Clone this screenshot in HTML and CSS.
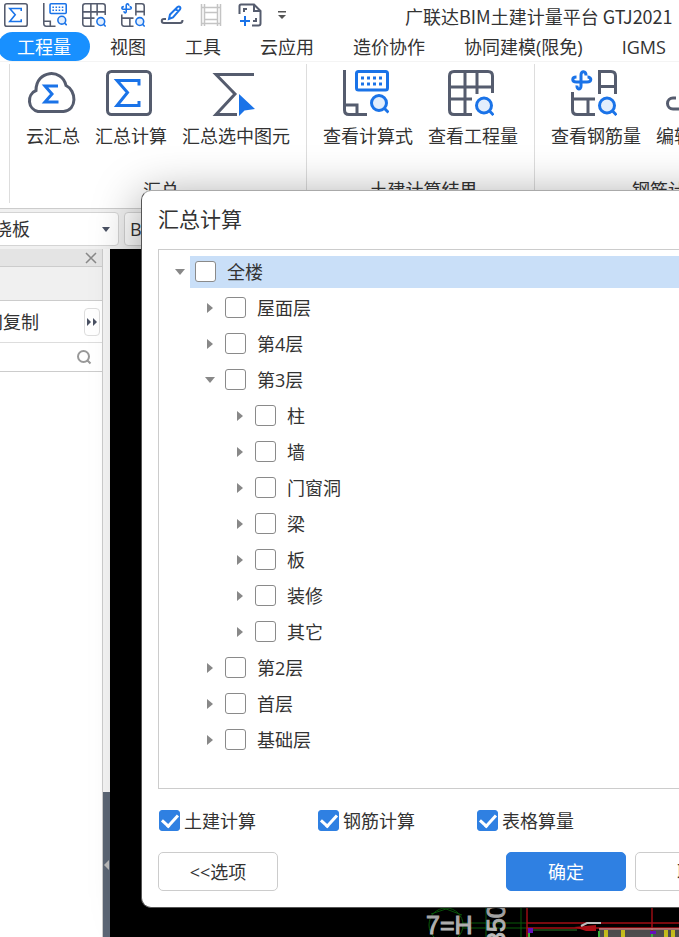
FILE: index.html
```
<!DOCTYPE html>
<html lang="zh-CN">
<head>
    <meta charset="UTF-8">
    <meta name="viewport" content="width=device-width, initial-scale=1">
    <title>广联达BIM土建计量平台 GTJ2021</title>
    <link rel="stylesheet" href="styles.css">
</head>
<body>
    <!-- shared icons -->
    <svg class="sprite" aria-hidden="true">
        <symbol id="i-sum" viewBox="0 0 46 46">
            <rect class="g" x="1.500" y="1.500" width="43" height="43" rx="4"/>
            <path class="b" d="M33 15.500v-5H11L21.500 22.500 11 35.500H33V31"/>
        </symbol>
        <symbol id="i-formula" viewBox="0 0 46 46">
            <path class="g" d="M1.500 0v40q0 4.500 4.500 4.500H24M1.500 35H14v9"/>
            <rect class="b" x="13.500" y="1.500" width="31" height="18.500" rx="2"/>
            <path class="dots" d="M18 8h24M18 14h24"/>
            <circle class="lens" cx="36" cy="33" r="7.500"/>
            <path class="b" d="M41.500 38.500l4 4"/>
        </symbol>
        <symbol id="i-table" viewBox="0 0 46 46">
            <path class="g" d="M24 44.500H6q-4.500 0-4.500-4.500V6Q1.500 1.500 6 1.500H40Q44.500 1.500 44.500 6V23M1.500 17h43M1.500 29H24M17 1.500v43M29 1.500V24"/>
            <circle class="lens" cx="36" cy="35.500" r="7.500"/>
            <path class="b" d="M41.500 41l4 4"/>
        </symbol>
        <symbol id="i-rebar" viewBox="0 0 46 46">
            <path class="b" d="M15 5.500C15 .5 10 .5 10 5V16C10 20 5.500 20 6 15.500M5.500 7C.5 7 .5 12 5.500 12H16C21 12 21 7 16.500 7"/>
            <path class="g" d="M28.500 24V1.500H40Q44.500 1.500 44.500 6V24M28.500 16.500h16M1.500 22v18q0 4.500 4.500 4.500H24M1.500 29H24M17 29v15"/>
            <circle class="lens" cx="36" cy="35.500" r="7.500"/>
            <path class="b" d="M41.500 41l4 4"/>
        </symbol>
    </svg>

    <div class="app">
        <header class="titlebar">
            <div class="quick">
                <button type="button" aria-label="汇总计算"><svg class="icon"><use href="#i-sum"/></svg></button>
                <button type="button" aria-label="查看计算式"><svg class="icon"><use href="#i-formula"/></svg></button>
                <button type="button" aria-label="查看工程量"><svg class="icon"><use href="#i-table"/></svg></button>
                <button type="button" aria-label="查看钢筋量"><svg class="icon"><use href="#i-rebar"/></svg></button>
                <button type="button" aria-label="编辑钢筋">
                    <svg class="icon" viewBox="0 0 24 24">
                        <path class="g thin" d="M6 16H4c-3 0-3 4 0 4H20q2.500 0 2.500-3"/>
                        <path class="b thin" d="M9 16l1-4.500L17.500 4q1.500-1 2.500 0t0 2.500L13 14.500zM15.500 6l3 2.500"/>
                    </svg>
                </button>
                <button type="button" aria-label="钢筋三维">
                    <svg class="icon" viewBox="0 0 24 24">
                        <path class="off" d="M2.500 1v22M5.500 1v22M18.500 1v22M21.500 1v22M2 4.500h20M5 9.500h14M5 16.500h14M2 20.500h20"/>
                    </svg>
                </button>
                <button type="button" aria-label="新建">
                    <svg class="icon" viewBox="0 0 24 24">
                        <path class="g thin" d="M1.500 11V3Q1.500 1.500 3 1.500H16L22.500 8V20.500Q22.500 22.500 20.500 22.500H14M16 1.500V8h6M6 9V6H9M18 15v3H15"/>
                        <path class="b thin" d="M7 13v10M2 18h10"/>
                    </svg>
                </button>
                <button type="button" class="more" aria-label="更多">
                    <svg viewBox="0 0 10 10"><path d="M1 1h8v1.500H1zM1 5h8L5 9z" fill="#555"/></svg>
                </button>
            </div>
            <h1>广联达BIM土建计量平台 GTJ2021</h1>
        </header>

        <nav class="tabs">
            <button type="button" class="tab active">工程量</button>
            <button type="button" class="tab">视图</button>
            <button type="button" class="tab">工具</button>
            <button type="button" class="tab">云应用</button>
            <button type="button" class="tab">造价协作</button>
            <button type="button" class="tab">协同建模(限免)</button>
            <button type="button" class="tab">IGMS</button>
        </nav>

        <div class="ribbon">
            <section class="group">
                <div class="tools">
                    <button type="button" class="tool">
                        <svg viewBox="0 0 46 46">
                            <path class="g" d="M10 41.500a10.500 11 0 0 1-2-21C8 0 34 -2 38 15.500 48.500 20.500 49.500 40 35.500 41.500z"/>
                            <path class="b" d="M30 16H17L24 24l-7 8H30.500"/>
                        </svg>
                        云汇总
                    </button>
                    <button type="button" class="tool"><svg><use href="#i-sum"/></svg>汇总计算</button>
                    <button type="button" class="tool">
                        <svg viewBox="0 0 46 46">
                            <path class="g" d="M43 4.500H5L24 24 5 44.500H26"/>
                            <path d="M28 24V46L33.500 40.500 44 39z" fill="#1a73e8"/>
                        </svg>
                        汇总选中图元
                    </button>
                </div>
                <h2>汇总</h2>
            </section>
            <section class="group">
                <div class="tools">
                    <button type="button" class="tool"><svg><use href="#i-formula"/></svg>查看计算式</button>
                    <button type="button" class="tool"><svg><use href="#i-table"/></svg>查看工程量</button>
                </div>
                <h2>土建计算结果</h2>
            </section>
            <section class="group">
                <div class="tools">
                    <button type="button" class="tool"><svg><use href="#i-rebar"/></svg>查看钢筋量</button>
                    <button type="button" class="tool">
                        <svg viewBox="0 0 46 46">
                            <path class="g" d="M9 28H6a5 5 0 0 0 0 11H36q6 0 6-6"/>
                            <path class="b" d="M16 31l2-9L34 5l7 7L25 29z"/>
                        </svg>
                        编辑钢筋
                    </button>
                    <button type="button" class="tool">
                        <svg viewBox="0 0 46 46"><path class="g" d="M5 2v42M41 2v42M5 12h36M5 34h36"/></svg>
                        钢筋三维
                    </button>
                </div>
                <h2>钢筋计算结果</h2>
            </section>
        </div>

        <div class="filters">
            <div class="picker">
                <select aria-label="构件类型"><option>现浇板</option></select>
                <svg viewBox="0 0 8 5"><path d="M0 0h8L4 5z" fill="#4a5163"/></svg>
            </div>
            <div class="picker">
                <select aria-label="构件"><option>B-1</option></select>
                <svg viewBox="0 0 8 5"><path d="M0 0h8L4 5z" fill="#4a5163"/></svg>
            </div>
        </div>

        <main class="workspace">
            <aside class="panel">
                <div class="panel-head">
                    <button type="button" aria-label="关闭">
                        <svg viewBox="0 0 12 12"><path d="M1 1l10 10M11 1L1 11" stroke="#888" stroke-width="1.500" fill="none"/></svg>
                    </button>
                </div>
                <div class="panel-tabs"></div>
                <div class="panel-tools">
                    <button type="button" class="copy">层间复制</button>
                    <button type="button" class="expand" aria-label="展开">
                        <svg viewBox="0 0 12 8"><path d="M1 0l4 4-4 4zM7 0l4 4-4 4z" fill="#4a5163"/></svg>
                    </button>
                </div>
                <div class="search">
                    <input type="text" aria-label="搜索">
                    <svg viewBox="0 0 16 16"><path d="M11.500 11.500L14.500 14.500M13 7.500A5.500 5.500 0 1 1 2 7.500a5.500 5.500 0 0 1 11 0" stroke="#999" stroke-width="2" fill="none"/></svg>
                </div>
            </aside>
            <div class="splitter">
                <button type="button" aria-label="折叠">
                    <svg viewBox="0 0 6 10"><path d="M6 0v10L1 5z" fill="#bbb"/></svg>
                </button>
            </div>
            <div class="canvas">
                <svg viewBox="0 0 264 37" class="drawing">
                    <g fill="none" stroke="#0a6a0a">
                        <ellipse cx="31" cy="25" rx="17" ry="17"/>
                        <path d="M16 14L31 9l16 6M48 23h64M48 28h64M106 0v37M71 0v37"/>
                    </g>
                    <text x="11" y="34" font-size="25">7=H</text>
                    <text x="-46" y="90" font-size="25" transform="rotate(-90)">350</text>
                    <path d="M184 30h80v7h-80z" fill="#555"/>
                    <path d="M112 0v37M237 0v37M112 23h152M112 28h152" stroke="#c01018" stroke-width="1.500"/>
                    <path d="M184 29h80" stroke="#e8a0a0" stroke-width="1.500"/>
                    <path d="M189 30h4v7h-4zM206 30h4v7h-4zM249 30h4v7h-4zM256 30h4v7h-4z" fill="#d8d020"/>
                    <path d="M116 30h46" stroke="#2f8f2f"/>
                    <path d="M114 32v5M184 31v6M237 32v5" stroke="#3fc03f" stroke-width="2"/>
                    <path d="M159 27l22-2v6h-10z" fill="#c01018"/>
                    <path d="M166 26l6-3h14" stroke="#ddd" stroke-width="2" fill="none"/>
                    <path d="M113 28h5v5h-5zM235 31h6v3h-6z" fill="#7010d0"/>
                </svg>
            </div>
        </main>

        <div class="dialog" role="dialog" aria-labelledby="dialog-title">
            <h2 id="dialog-title">汇总计算</h2>

            <ul class="tree">
                <li>
                    <div class="row selected"><button type="button" class="arrow open" aria-label="折叠"></button><label><input type="checkbox">全楼</label></div>
                    <ul>
                        <li><div class="row"><button type="button" class="arrow" aria-label="展开"></button><label><input type="checkbox">屋面层</label></div></li>
                        <li><div class="row"><button type="button" class="arrow" aria-label="展开"></button><label><input type="checkbox">第4层</label></div></li>
                        <li>
                            <div class="row"><button type="button" class="arrow open" aria-label="折叠"></button><label><input type="checkbox">第3层</label></div>
                            <ul>
                                <li><div class="row"><button type="button" class="arrow" aria-label="展开"></button><label><input type="checkbox">柱</label></div></li>
                                <li><div class="row"><button type="button" class="arrow" aria-label="展开"></button><label><input type="checkbox">墙</label></div></li>
                                <li><div class="row"><button type="button" class="arrow" aria-label="展开"></button><label><input type="checkbox">门窗洞</label></div></li>
                                <li><div class="row"><button type="button" class="arrow" aria-label="展开"></button><label><input type="checkbox">梁</label></div></li>
                                <li><div class="row"><button type="button" class="arrow" aria-label="展开"></button><label><input type="checkbox">板</label></div></li>
                                <li><div class="row"><button type="button" class="arrow" aria-label="展开"></button><label><input type="checkbox">装修</label></div></li>
                                <li><div class="row"><button type="button" class="arrow" aria-label="展开"></button><label><input type="checkbox">其它</label></div></li>
                            </ul>
                        </li>
                        <li><div class="row"><button type="button" class="arrow" aria-label="展开"></button><label><input type="checkbox">第2层</label></div></li>
                        <li><div class="row"><button type="button" class="arrow" aria-label="展开"></button><label><input type="checkbox">首层</label></div></li>
                        <li><div class="row"><button type="button" class="arrow" aria-label="展开"></button><label><input type="checkbox">基础层</label></div></li>
                    </ul>
                </li>
            </ul>

            <div class="options">
                <label><input type="checkbox" checked>土建计算</label>
                <label><input type="checkbox" checked>钢筋计算</label>
                <label><input type="checkbox" checked>表格算量</label>
            </div>

            <div class="actions">
                <button type="button" class="btn">&lt;&lt;选项</button>
                <button type="button" class="btn primary">确定</button>
                <button type="button" class="btn">取消</button>
            </div>
        </div>
    </div>
</body>
</html>
```
FILE: styles.css
```
* {
    box-sizing: border-box;
}

body {
    margin: 0;
    font-family: "Open Sans", "Noto Sans CJK SC", sans-serif;
    font-size: 18px;
    line-height: 24px;
    color: #333;
}

button, input, select {
    font: inherit;
    color: inherit;
}

button {
    padding: 0;
    border: none;
    background: none;
    white-space: nowrap;
    cursor: pointer;
}

h1, h2 {
    margin: 0;
    font-size: 18px;
    font-weight: normal;
    white-space: nowrap;
}

ul {
    margin: 0;
    padding: 0;
    list-style: none;
}

svg {
    display: block;
    overflow: visible;
}

.sprite {
    position: absolute;
    width: 0;
    height: 0;
}

/* icon strokes */
.g, .b, .lens, .dots, .off {
    fill: none;
    stroke: #555c6e;
    stroke-width: 3;
}

.b {
    stroke: #1a73e8;
}

.thin {
    stroke-width: 2;
}

.lens {
    fill: #e3eefc;
    stroke: #1a73e8;
}

.dots {
    stroke: #1a73e8;
    stroke-dasharray: 3 3;
}

.off {
    stroke: #c4c4c4;
    stroke-width: 1.5;
}

.app {
    position: relative;
    display: flex;
    flex-direction: column;
    height: 100vh;
    overflow: hidden;
    background: #fff;
}

/* title bar */
.titlebar {
    display: flex;
    align-items: center;
    gap: 118px;
    height: 32px;
    padding: 0 4px;
}

.titlebar h1 {
    font-family: "Noto Sans CJK SC", sans-serif;
}

.quick {
    display: flex;
    align-items: center;
    gap: 15px;
    padding-bottom: 3px;
}

.icon {
    width: 24px;
    height: 24px;
}

.more svg {
    width: 10px;
    height: 10px;
}

/* tabs */
.tabs {
    display: flex;
    gap: 1px;
    margin-left: -2px;
    height: 30px;
    border-bottom: 1px solid #f4f4f4;
}

.tab {
    height: 29px;
    padding: 0 19px;
    border-radius: 15px;
}

.tab.active {
    background: #1890ff;
    color: #fff;
}

/* ribbon */
.ribbon {
    display: flex;
    padding: 2px 0 5px 9px;
    border-bottom: 1px solid #ccc;
}

.group {
    display: flex;
    flex-direction: column;
    flex-shrink: 0;
    justify-content: space-between;
    height: 139px;
    padding: 6px 16px 1px;
    border-left: 1px solid #ddd;
}

.group h2 {
    padding-left: 6px;
    text-align: center;
}

.tools {
    display: flex;
    gap: 15px;
}

.tool {
    display: flex;
    flex-direction: column;
    align-items: center;
    gap: 8px;
}

.tool svg {
    width: 46px;
    height: 46px;
    margin-right: 4px;
}

/* selectors under the ribbon */
.filters {
    display: flex;
    gap: 5px;
    height: 40px;
    margin-left: -34px;
    padding: 3px 0;
    background: #f0f0f0;
}

.picker {
    display: flex;
    align-items: center;
    width: 153px;
    padding: 0 8px 0 5px;
    border: 1px solid #d4d4d4;
    border-radius: 4px;
    background: #fff;
}

.picker:first-child {
    padding-left: 9px;
}

.picker select {
    appearance: none;
    flex: 1;
    min-width: 0;
    padding: 0;
    border: none;
    background: none;
}

.picker svg {
    width: 8px;
    height: 5px;
}

/* workspace */
.workspace {
    display: flex;
    flex: 1;
    min-height: 0;
}

.panel {
    width: 103px;
    border-right: 1px solid #ccc;
}

.panel-head {
    display: flex;
    align-items: center;
    justify-content: flex-end;
    height: 18px;
    padding-right: 5px;
    background: #e4e4e4;
    border-bottom: 1px solid #ccc;
}

.panel-head svg {
    width: 12px;
    height: 12px;
}

.panel-tabs {
    height: 34px;
    background: #f0f0f0;
    border-bottom: 1px solid #ccc;
}

.panel-tools {
    display: flex;
    align-items: center;
    justify-content: space-between;
    height: 42px;
    padding-right: 2px;
    border-bottom: 1px solid #ddd;
}

.copy {
    margin-left: -33px;
}

.expand {
    width: 16px;
    height: 28px;
    border: 1px solid #ddd;
    border-radius: 4px;
}

.expand svg {
    width: 12px;
    height: 8px;
    margin: 0 auto;
}

.search {
    display: flex;
    align-items: center;
    height: 29px;
    padding-right: 10px;
    border-bottom: 1px solid #ccc;
}

.search input {
    flex: 1;
    min-width: 0;
    border: none;
    outline: none;
}

.search svg {
    width: 16px;
    height: 16px;
}

.splitter {
    display: flex;
    flex-direction: column;
    justify-content: flex-end;
    width: 7px;
    background: #f4f4f4;
}

.splitter button {
    height: 145px;
    background: #5c6675;
}

.splitter svg {
    width: 6px;
    height: 10px;
}

.canvas {
    display: flex;
    flex: 1;
    align-items: flex-end;
    justify-content: flex-end;
    background: #000;
}

.drawing {
    width: 264px;
    height: 37px;
    overflow: hidden;
}

.drawing text {
    fill: #ccc;
    stroke: #ccc;
    font-family: "Liberation Sans", sans-serif;
}

/* dialog window, floats over the workspace */
.dialog {
    position: absolute;
    top: 190px;
    left: 141px;
    width: 631px;
    padding: 16px 16px;
    border: 1px solid #555;
    border-top-color: #aaa;
    border-radius: 10px;
    background: #fff;
    box-shadow: 0 8px 48px rgba(0, 0, 0, 0.4);
}

.dialog > h2 {
    margin-bottom: 18px;
    font-size: 21px;
}

.tree {
    height: 540px;
    padding: 4px 0;
    border: 1px solid #ccc;
}

.tree ul {
    padding-left: 30px;
}

.row {
    display: flex;
    align-items: center;
    height: 36px;
    padding-left: 11px;
}

.row label {
    display: flex;
    flex: 1;
    align-items: center;
    gap: 11px;
    height: 32px;
    padding-left: 5px;
}

.selected label {
    background: #c9dff8;
}

.arrow {
    display: flex;
    align-items: center;
    justify-content: center;
    width: 20px;
    height: 20px;
}

.arrow::before {
    content: "";
    border: 5px solid transparent;
    border-left: 6px solid #888;
    border-right: none;
}

.arrow.open::before {
    border: 5px solid transparent;
    border-top: 6px solid #888;
    border-bottom: none;
}

input[type="checkbox"] {
    appearance: none;
    display: flex;
    align-items: center;
    justify-content: center;
    width: 21px;
    height: 21px;
    margin: 0 0 1px;
    border: 1px solid #8a8a8a;
    border-radius: 3px;
    background: #fff;
}

input[type="checkbox"]:checked {
    border-color: #2f80e2;
    background: #2f80e2;
}

input[type="checkbox"]:checked::before {
    content: "";
    width: 7px;
    height: 13px;
    margin-bottom: 4px;
    border: solid #fff;
    border-width: 0 3px 3px 0;
    transform: rotate(42deg);
}

.options {
    display: flex;
    gap: 62px;
    padding: 20px 1px 19px;
}

.options label {
    display: flex;
    align-items: center;
    gap: 4px;
}

.actions {
    display: flex;
    gap: 9px;
}

.btn {
    width: 120px;
    height: 39px;
    border: 1px solid #ccc;
    border-radius: 5px;
    background: #fff;
}

.btn:first-child {
    margin-right: auto;
}

.btn.primary {
    border-color: #2f80e2;
    background: #2f80e2;
    color: #fff;
}
```
